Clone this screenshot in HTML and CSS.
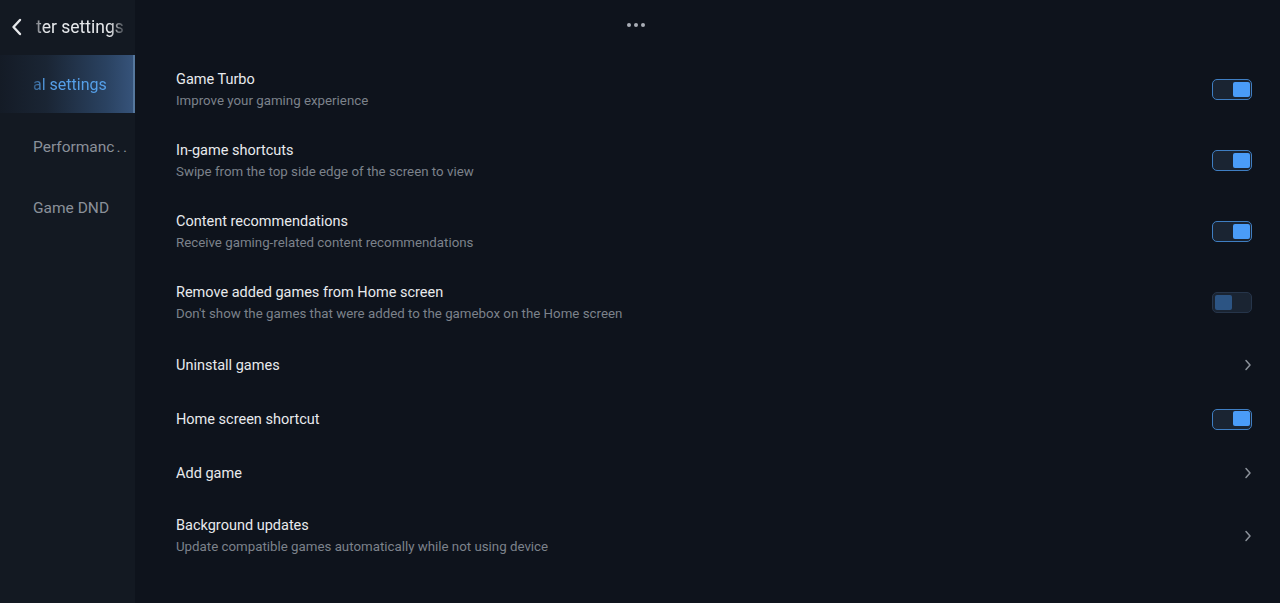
FILE: index.html
```html
<!DOCTYPE html>
<html lang="en">
<head>
<meta charset="utf-8">
<title>Game settings</title>
<link rel="stylesheet" href="styles.css">
</head>
<body>
<div class="app">
  <aside class="sidebar">
    <div class="side-head">
      <svg class="back" width="14" height="18" viewBox="0 0 14 18"><path d="M10 2 L3.5 9 L10 16" fill="none" stroke="#e6e8eb" stroke-width="2.4" stroke-linecap="round" stroke-linejoin="round"/></svg>
      <div class="title-clip"><span class="title">ter settings</span></div>
    </div>
    <nav class="nav">
      <div class="nav-item active"><span class="fade">al settings</span></div>
      <div class="nav-item"><span>Performanc<span class="ell">..</span></span></div>
      <div class="nav-item"><span>Game DND</span></div>
    </nav>
  </aside>
  <main class="main">
    <div class="topbar">
      <div class="dots"><i></i><i></i><i></i></div>
    </div>
    <div class="list">
      <div class="row two">
        <div class="text"><div class="t">Game Turbo</div><div class="s">Improve your gaming experience</div></div>
        <div class="toggle on"><b></b></div>
      </div>
      <div class="row two">
        <div class="text"><div class="t">In-game shortcuts</div><div class="s">Swipe from the top side edge of the screen to view</div></div>
        <div class="toggle on"><b></b></div>
      </div>
      <div class="row two">
        <div class="text"><div class="t">Content recommendations</div><div class="s">Receive gaming-related content recommendations</div></div>
        <div class="toggle on"><b></b></div>
      </div>
      <div class="row two">
        <div class="text"><div class="t">Remove added games from Home screen</div><div class="s">Don't show the games that were added to the gamebox on the Home screen</div></div>
        <div class="toggle off"><b></b></div>
      </div>
      <div class="row one">
        <div class="text"><div class="t">Uninstall games</div></div>
        <svg class="chev" width="8" height="12" viewBox="0 0 8 12"><path d="M2 1.5 L6 6 L2 10.5" fill="none" stroke="#8b919a" stroke-width="1.5" stroke-linecap="round" stroke-linejoin="round"/></svg>
      </div>
      <div class="row one">
        <div class="text"><div class="t">Home screen shortcut</div></div>
        <div class="toggle on"><b></b></div>
      </div>
      <div class="row one">
        <div class="text"><div class="t">Add game</div></div>
        <svg class="chev" width="8" height="12" viewBox="0 0 8 12"><path d="M2 1.5 L6 6 L2 10.5" fill="none" stroke="#8b919a" stroke-width="1.5" stroke-linecap="round" stroke-linejoin="round"/></svg>
      </div>
      <div class="row two">
        <div class="text"><div class="t">Background updates</div><div class="s">Update compatible games automatically while not using device</div></div>
        <svg class="chev" width="8" height="12" viewBox="0 0 8 12"><path d="M2 1.5 L6 6 L2 10.5" fill="none" stroke="#8b919a" stroke-width="1.5" stroke-linecap="round" stroke-linejoin="round"/></svg>
      </div>
    </div>
  </main>
</div>
</body>
</html>
```
FILE: styles.css
```css
* { box-sizing: border-box; }
html, body { margin: 0; padding: 0; }
body {
  background: #0e131c;
  font-family: "Roboto", "Noto Sans", sans-serif;
  color: #e8eaed;
  width: 1280px;
  height: 603px;
  overflow: hidden;
}
.app { display: flex; height: 603px; }
.sidebar {
  width: 135px;
  flex: 0 0 135px;
  background: #131922;
  display: flex;
  flex-direction: column;
}
.side-head {
  height: 55px;
  display: flex;
  align-items: center;
  padding-left: 10px;
  padding-bottom: 2px;
}
.back { flex: 0 0 auto; }
.title-clip {
  margin-left: 12px;
  width: 90px;
  overflow: hidden;
  white-space: nowrap;
  -webkit-mask-image: linear-gradient(to right, rgba(0,0,0,0.45) 0, #000 9px, #000 74px, rgba(0,0,0,0.1) 90px);
  mask-image: linear-gradient(to right, rgba(0,0,0,0.45) 0, #000 9px, #000 74px, rgba(0,0,0,0.1) 90px);
}
.title { font-size: 17.5px; color: #e6e8eb; }
.nav { display: flex; flex-direction: column; }
.nav-item {
  height: 61px;
  display: flex;
  align-items: center;
  padding-left: 33px;
  font-size: 15.5px;
  color: #8a9099;
  white-space: nowrap;
}
.ell { letter-spacing: 2.5px; margin-left: 2px; }
.nav-item.active {
  height: 58px;
  margin-bottom: 3px;
  color: #559fe8;
  font-size: 16px;
  background: linear-gradient(to right, #141b26 0%, #1a2534 35%, #2a4261 80%, #36537a 100%);
  border-right: 2px solid #56789e;
}
.fade {
  -webkit-mask-image: linear-gradient(to right, rgba(0,0,0,0.45) 0, #000 14px);
  mask-image: linear-gradient(to right, rgba(0,0,0,0.45) 0, #000 14px);
}
.main { flex: 1; display: flex; flex-direction: column; }
.topbar { height: 54px; display: flex; align-items: center; padding-left: 492px; padding-bottom: 4px; }
.dots { display: flex; gap: 3px; }
.dots i { width: 4px; height: 4px; border-radius: 50%; background: #a9aeb6; display: block; }
.list { display: flex; flex-direction: column; padding: 0 28px 0 41px; }
.row { display: flex; align-items: center; justify-content: space-between; }
.row.two { height: 71px; }
.row.one { height: 54px; }
.text { padding-top: 1px; }
.t { font-size: 14.5px; line-height: 21px; color: #e8eaed; }
.s { font-size: 13.3px; line-height: 21px; color: #7c828b; }
.toggle {
  width: 40px;
  height: 21px;
  border-radius: 5px;
  border: 1.5px solid #3f7ec2;
  background: #1a2432;
  padding: 1.5px;
  display: flex;
}
.toggle b { width: 17px; height: 15px; border-radius: 2px; background: #4a9cf8; display: block; }
.toggle.on { justify-content: flex-end; }
.toggle.off { border-color: #26354a; justify-content: flex-start; }
.toggle.off b { background: #2c5483; }
.chev { margin-right: 0; }
```
